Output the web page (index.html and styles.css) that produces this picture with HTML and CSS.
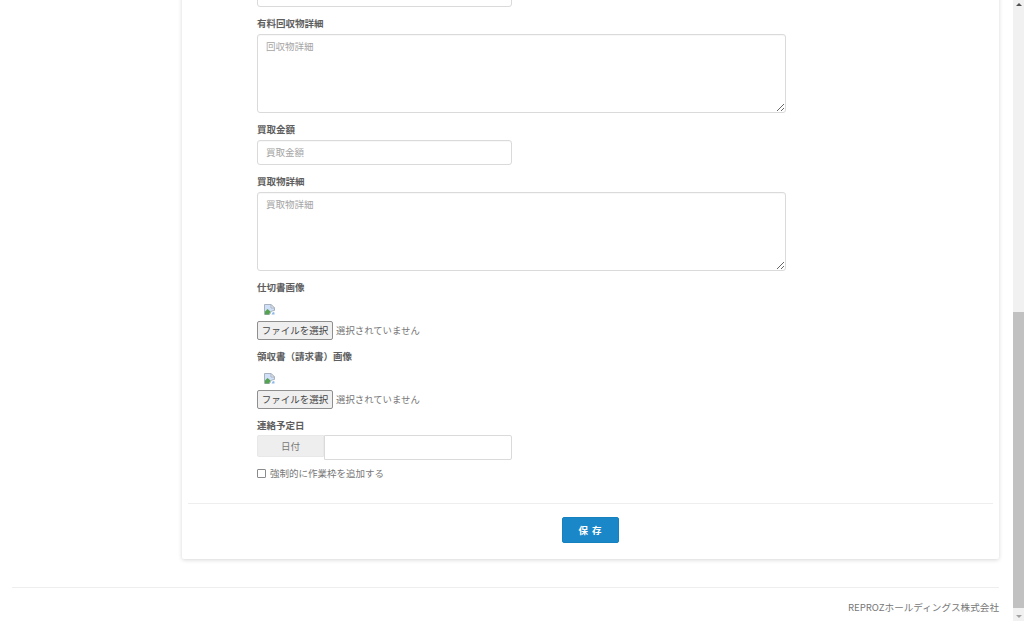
FILE: index.html
```html
<!DOCTYPE html>
<html lang="ja">
<head>
<meta charset="utf-8">
<title>作業詳細</title>
<link rel="stylesheet" href="styles.css">
</head>
<body>
<div class="page">
  <main class="content">
    <section class="card">
      <form class="form">
        <div class="field"><input class="input half" type="text"></div>
        <div class="field">
          <label class="label">有料回収物詳細</label>
          <textarea class="input area" placeholder="回収物詳細"></textarea>
        </div>
        <div class="field">
          <label class="label">買取金額</label>
          <input class="input half" type="text" placeholder="買取金額">
        </div>
        <div class="field">
          <label class="label">買取物詳細</label>
          <textarea class="input area" placeholder="買取物詳細"></textarea>
        </div>
        <div class="field">
          <label class="label">仕切書画像</label>
          <div class="thumb">
            <svg class="broken" viewBox="0 0 11 11" width="11" height="11"><path d="M.5.5h6.500l3.500 3.500v2.500l-3 .5-2 3.500H.5z" fill="#cfe0f8" stroke="#a8b2bf"/><path d="M1 10.500V7.500l2.500-2.500 3 2.500-1.500 3z" fill="#55a34f"/><path d="M7 .5v3.500h3.500z" fill="#f2f2f2" stroke="#a8b2bf"/><path d="M7.500 10.500l1.500-2.500 1.500.5v2z" fill="#8fb7e8"/></svg>
          </div>
          <div class="file"><span class="file-btn">ファイルを選択</span><span class="file-name">選択されていません</span></div>
        </div>
        <div class="field">
          <label class="label">領収書（請求書）画像</label>
          <div class="thumb">
            <svg class="broken" viewBox="0 0 11 11" width="11" height="11"><path d="M.5.5h6.500l3.500 3.500v2.500l-3 .5-2 3.500H.5z" fill="#cfe0f8" stroke="#a8b2bf"/><path d="M1 10.500V7.500l2.500-2.500 3 2.500-1.500 3z" fill="#55a34f"/><path d="M7 .5v3.500h3.500z" fill="#f2f2f2" stroke="#a8b2bf"/><path d="M7.500 10.500l1.500-2.500 1.500.5v2z" fill="#8fb7e8"/></svg>
          </div>
          <div class="file"><span class="file-btn">ファイルを選択</span><span class="file-name">選択されていません</span></div>
        </div>
        <div class="field tight">
          <label class="label">連絡予定日</label>
          <div class="date-group">
            <span class="date-addon">日付</span>
            <input class="date-input" type="text">
          </div>
        </div>
        <label class="check"><input class="check-box" type="checkbox"><span>強制的に作業枠を追加する</span></label>
      </form>
      <div class="actions"><button class="save" type="button">保 存</button></div>
    </section>
  </main>
  <footer class="footer">REPROZホールディングス株式会社</footer>
</div>
<div class="scrollbar">
  <span class="arrow up"></span>
  <div class="track"><div class="thumb-bar"></div></div>
  <span class="arrow down"></span>
</div>
</body>
</html>
```
FILE: styles.css
```css
* { box-sizing: border-box; }
html, body { margin: 0; height: 621px; overflow: hidden; background: #fff; }
body {
  display: flex;
  font-family: "Noto Sans CJK JP", "Liberation Sans", sans-serif;
  font-size: 9.5px;
  color: #777;
}
.page { flex: 1; min-width: 0; padding: 0 14px 0 12px; }
.content { padding-left: 170px; margin-top: -18px; }
.card {
  background: #fff;
  border-radius: 2px;
  box-shadow: 0 1px 4px rgba(0, 0, 0, .16);
  padding: 0 6px;
}
.form { padding: 0 0 0 69px; width: 604px; }
.field { margin-bottom: 9px; }
.field.tight { margin-bottom: 6px; }
.label { display: block; font-weight: 700; line-height: 14px; margin-bottom: 4px; color: #5e5e5e; }
.input {
  display: block;
  border: 1px solid #dadada;
  border-radius: 3px;
  background: #fff;
  font: inherit;
  color: #555;
  padding: 3px 8px 5px;
  outline: none;
  box-shadow: inset 0 1px 1px rgba(0, 0, 0, .03);
}
.input::placeholder { color: #a5a5a5; opacity: 1; }
.half { width: 255px; height: 25px; }
.area { width: 529px; height: 79px; resize: vertical; line-height: 14px; padding-top: 4px; }
.thumb { height: 22px; padding: 6px 0 0 7px; }
.broken { display: block; }
.file { display: flex; align-items: center; height: 19px; margin-top: 1px; }
.file-btn {
  width: 76px;
  height: 19px;
  line-height: 16px;
  text-align: center;
  color: #444;
  background: #efefef;
  border: 1px solid #8f8f8f;
  border-radius: 2px;
}
.file-name { margin-left: 3px; padding-bottom: 2px; font-size: 9.4px; }
.date-group { display: flex; width: 255px; margin-top: -1px; }
.date-addon {
  width: 67px;
  height: 22px;
  line-height: 21px;
  text-align: center;
  background: #eee;
  border: 1px solid #e8e8e8;
  border-radius: 2px 0 0 2px;
}
.date-input {
  flex: 1;
  min-width: 0;
  height: 25px;
  border: 1px solid #dadada;
  background: #fff;
  outline: none;
  border-radius: 0 2px 2px 0;
}
.check { display: flex; align-items: center; gap: 4px; line-height: 14px; }
.check-box {
  appearance: none;
  margin: 0;
  width: 9px;
  height: 9px;
  background: #fff;
  border: 1px solid #8a8a8a;
  border-radius: 1px;
}
.actions {
  border-top: 1px solid #eee;
  margin-top: 23px;
  padding: 13px 0 16px;
  display: flex;
  justify-content: center;
}
.save {
  width: 57px;
  height: 26px;
  border: 1px solid #1681bf;
  border-radius: 2px;
  background: #1a87c9;
  color: #fff;
  font: inherit;
  font-weight: 700;
  letter-spacing: 1px;
  padding: 0;
}
.footer {
  border-top: 1px solid #eee;
  margin-top: 28px;
  padding-top: 12px;
  text-align: right;
  line-height: 14px;
  font-size: 9.6px;
}
.scrollbar {
  flex: none;
  width: 11px;
  height: 621px;
  background: #f1f1f1;
  display: flex;
  flex-direction: column;
  align-items: center;
}
.arrow { flex: none; width: 0; height: 0; border-left: 3px solid transparent; border-right: 3px solid transparent; }
.arrow.up { border-bottom: 3px solid #505050; margin: 3px 0 5px; }
.arrow.down { border-top: 3px solid #a3a3a3; margin: 7px 0 3px; }
.track { flex: 1; width: 100%; display: flex; flex-direction: column; justify-content: flex-end; }
.thumb-bar { width: 100%; height: 296px; background: #c1c1c1; }
```
